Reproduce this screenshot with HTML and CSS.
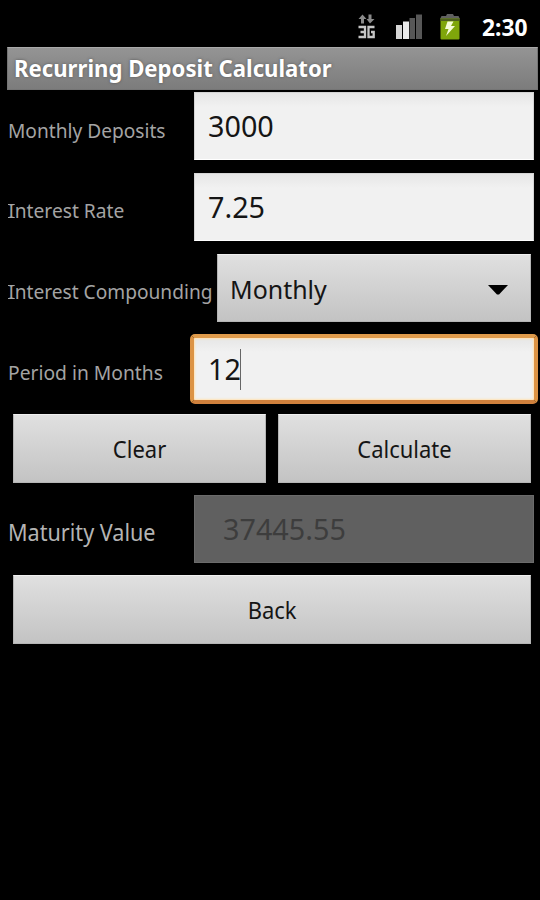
FILE: index.html
```
<!DOCTYPE html>
<html lang="en">
<head>
<meta charset="utf-8">
<title>Recurring Deposit Calculator</title>
<link rel="stylesheet" href="styles.css">
</head>
<body>
<header class="status">
  <svg class="net" width="18" height="26" viewBox="0 0 18 26">
    <path d="M4.500 .5 8.500 5H6V9.500H3V5H.5ZM10.500 .5h3V5h3L12 9.500 8.500 5H10.500Z" fill="#8a8a8a"/>
    <path d="M.5 13H7V23H.5M2.500 18H7M16.500 13H10.500V23H15.700V18H13" fill="none" stroke="#c6c6c6" stroke-width="2.300"/>
  </svg>
  <svg class="signal" width="26" height="26" viewBox="0 0 26 26">
    <path d="M0 11h6v14H0z" fill="#d6d6d6"/><path d="M7 7.500h6V25H7z" fill="#ebebeb"/>
    <path d="M13.500 4h5.500v21h-5.500zM20 .500h6V25h-6z" fill="#575757"/>
  </svg>
  <svg class="battery" width="20" height="27" viewBox="0 0 20 27">
    <path d="M0 6 1.500 3H6L7 1H13L14 3H18.500L20 6Z" fill="#606060"/>
    <rect x=".5" y="5.500" width="19" height="21" rx="1" fill="#7fa60b"/>
    <path d="M.5 5.500H19.500V8H.5Z" fill="#4e5f20"/>
    <path d="M7.500 8.500H13.500L11 13H15L6 23 8.500 16H5Z" fill="#f4fbd8"/>
  </svg>
  <span class="clock"><span class="t t-clock">2:30</span></span>
</header>
<main>
  <h1 class="title"><span class="t t-title">Recurring Deposit Calculator</span></h1>
  <div class="row first">
    <div class="label"><span class="t t-monthly">Monthly Deposits</span></div>
    <div class="field"><span class="t">3000</span></div>
  </div>
  <div class="row">
    <div class="label upper"><span class="t t-rate"><span class="cap-i">I</span>nterest Rate</span></div>
    <div class="field"><span class="t">7.25</span></div>
  </div>
  <div class="row">
    <div class="label wide"><span class="t t-comp"><span class="cap-i">I</span>nterest Compounding</span></div>
    <div class="spinner button"><span class="t t-spin">Monthly</span>
      <svg width="20" height="10" viewBox="0 0 20 10"><path d="M0 0H20L11 9.500H9Z" fill="#000"/></svg>
    </div>
  </div>
  <div class="row focus-row">
    <div class="label"><span class="t t-period">Period in Months</span></div>
    <div class="field focused"><span class="t">12</span><i class="caret"></i></div>
  </div>
  <div class="row actions">
    <div class="button"><span class="t t-clear">Clear</span></div>
    <div class="button"><span class="t t-calc">Calculate</span></div>
  </div>
  <div class="row">
    <div class="label big"><span class="t t-maturity">Maturity Value</span></div>
    <div class="field disabled"><span class="t">37445.55</span></div>
  </div>
  <div class="row actions back">
    <div class="button"><span class="t t-back">Back</span></div>
  </div>
</main>
</body>
</html>
```
FILE: styles.css
```
* { box-sizing: border-box; }
html, body { margin: 0; background: #000; }
body { width: 540px; height: 900px; overflow: hidden; font-family: "Noto Sans", "Open Sans", sans-serif; }
.t { display: inline-block; white-space: nowrap; transform: scaleX(.975); transform-origin: 0 50%; }
svg { display: block; }

.status { display: flex; height: 47px; align-items: flex-start; padding: 14px 11px 0 0; justify-content: flex-end; }
.signal { margin-left: 20px; }
.battery { margin: -1px 0 0 18px; }
.clock { width: 47px; margin-left: 22px; color: #fff; font-size: 24px; font-weight: 700; line-height: 26px; }
.t-clock { transform: scaleX(.95); }

.title { margin: 0 2px 0 7px; height: 43px; padding-left: 6px; border: 1px solid #757575; border-top-color: #aaa;
  background: linear-gradient(#949494, #7c7c7c); color: #fff; font-size: 23px; font-weight: 700; line-height: 40px;
  text-shadow: 0 0 3px #555; }
.t-title { transform: scaleX(.963); }

.row { display: flex; height: 68px; margin: 13px 6px 0 8px; align-items: stretch; }
.row.first { margin-top: 2px; }
.label { width: 186px; flex: none; color: #a4a4a4; font-size: 20px; line-height: 77px; }
.label.upper { line-height: 75px; }
.label.wide { width: 209px; line-height: 76px; }
.label.big { font-size: 24px; line-height: 74px; color: #b4b4b4; }
.t-monthly { transform: scaleX(.957); }
.t-rate { transform: scaleX(.96); }
.t-comp { transform: scaleX(.957); }
.t-period { transform: scaleX(.963); }
.t-maturity { transform: scaleX(.9); }

/* Capital I with crossbars at cap height and baseline */
.cap-i { display: inline-block; position: relative; line-height: 1; width: 7px; text-align: center; }
.cap-i::before, .cap-i::after { content: ""; position: absolute; left: 0; width: 7px; height: 1px; background: currentColor; }
.cap-i::before { top: 3px; }
.cap-i::after { top: 16px; }

.field { flex: 1; height: 68px; padding-left: 13px; display: flex; align-items: center; font-size: 29.500px; line-height: 40px;
  color: #151515; background: linear-gradient(#e6e6e6, #f1f1f1 14px); border: 1px solid #d5d5d5; border-bottom-color: #fff; }
.focus-row { margin: 12px 2px 0 8px; height: 70px; }
.focus-row .label { width: 182px; line-height: 78px; }
.field.focused { height: 70px; padding-left: 14px; border: 4px solid #dc9344; border-color: #df9b4b #dc9344 #cf803c; border-radius: 5px;
  box-shadow: inset 0 0 2px 1px #ffe2b3; }
.caret { width: 1px; height: 41px; margin-left: -2px; background: #666; }
.field.disabled { background: #606060; border-color: #6b6b6b; color: #3d3d3d; padding-left: 28px; }

.button { flex: 1; height: 69px; display: flex; align-items: center; justify-content: center; color: #151515;
  background: linear-gradient(#e0e0e0, #c3c3c3); border: 1px solid #b5b5b5; border-top-color: #f0f0f0;
  font-size: 23.500px; line-height: 30px; }
.button .t { transform: scaleX(.935); transform-origin: 50% 50%; }
.spinner.button { height: 68px; margin-right: 3px; padding: 2px 22px 0 12px; justify-content: space-between; font-size: 26px; }
.spinner.button .t { transform: scaleX(.96); transform-origin: 0 50%; }
.spinner svg { margin-top: 2px; }
.actions { margin: 10px 9px 0 13px; gap: 12px; height: 70px; }
.actions + .row { margin-top: 11px; }
.actions.back { margin-top: 12px; }
```
